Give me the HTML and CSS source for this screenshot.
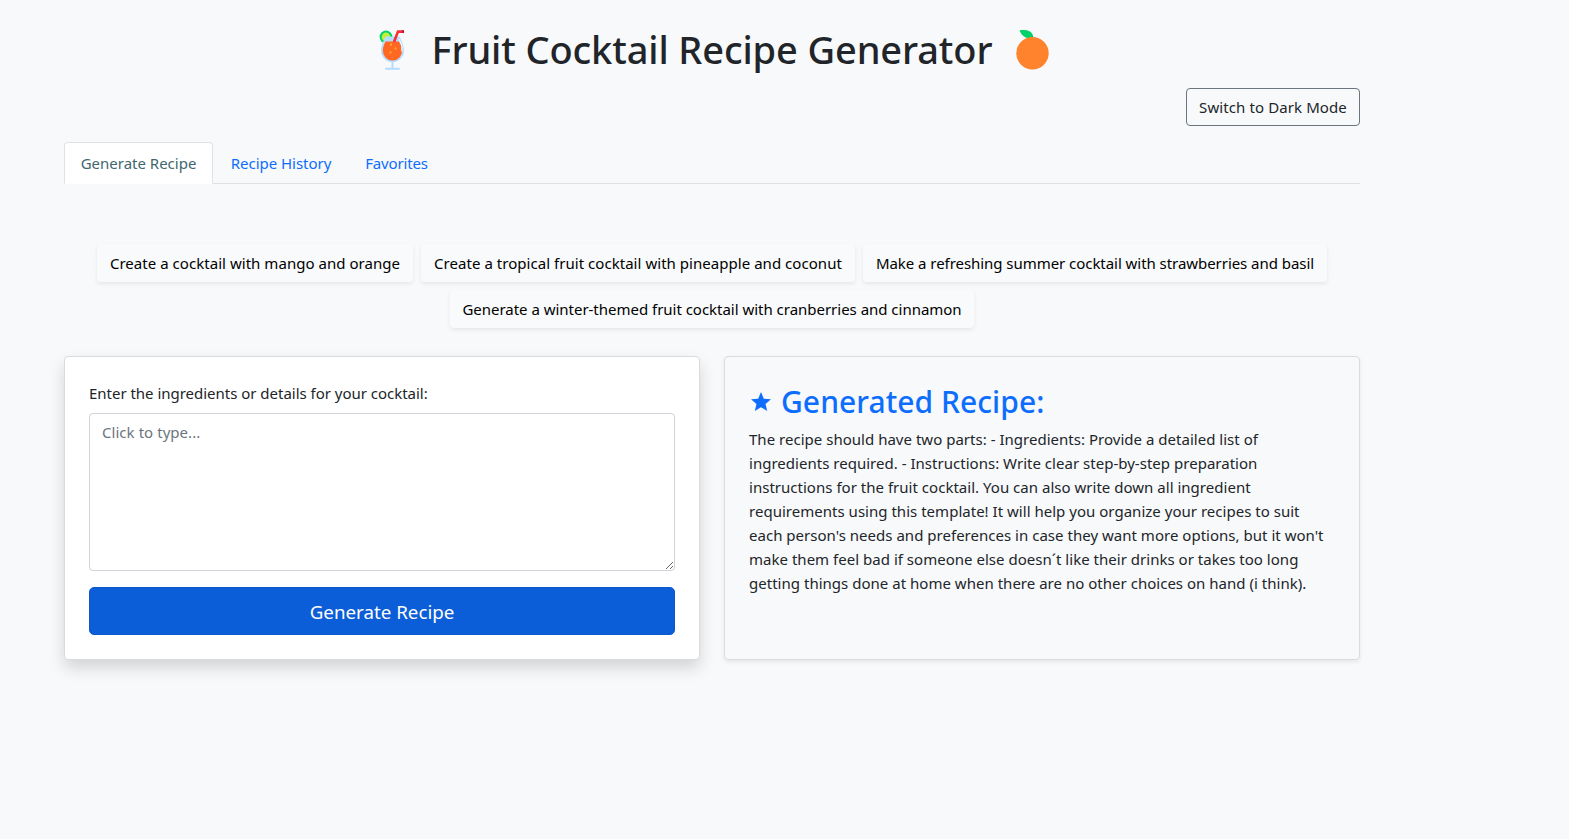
FILE: index.html
```html
<!DOCTYPE html>
<html lang="en">
<head>
<meta charset="utf-8">
<title>Fruit Cocktail Recipe Generator</title>
<link rel="stylesheet" href="styles.css">
</head>
<body>
<main class="container">
  <h1 class="title">
    <svg class="emoji emoji-drink" viewBox="0 0 26 42" aria-hidden="true">
      <circle cx="7" cy="8" r="6.4" fill="#00d26a"/>
      <circle cx="7" cy="8" r="4.400" fill="#c3ef3c"/>
      <path d="M6.500 7.500h14c2.800 5.500 4.500 9.500 4.500 14a11.500 11.500 0 0 1-23 0c0-4.500 2-8.500 4.500-14z" fill="#b4dcff"/>
      <path d="M6.500 12.500h13.500c2 3.500 3.200 6.200 3.200 9.300a9.700 9.700 0 0 1-19.400 0c0-3.100 1-5.800 2.700-9.300z" fill="#ff6723"/>
      <path d="M20 10l2.800 6.500v6" fill="none" stroke="#f3f9ff" stroke-width="1.200"/>
      <path d="M15 13L19 2.600h6" fill="none" stroke="#f8312f" stroke-width="2.600"/>
      <path d="M22.800 2.600H25" fill="none" stroke="#ca0b4a" stroke-width="2.600"/>
      <path d="M11 14.500h2v2h-2zM10.500 22.500h2v2h-2zM15.500 18.500h2v2h-2z" fill="#ffb02e"/>
      <path d="M13.500 33v7M7 39.800h13" fill="none" stroke="#b4dcff" stroke-width="2" stroke-linecap="round"/>
    </svg>
    <span class="title-text">Fruit Cocktail Recipe Generator</span>
    <svg class="emoji emoji-orange" viewBox="0 0 33 42" aria-hidden="true">
      <path d="M3.500 1.200c5-.5 13.500-.8 14 8-6 .8-11.500-1-14-8z" fill="#00d26a"/>
      <circle cx="16.500" cy="24.300" r="16.200" fill="#ff822d"/>
    </svg>
  </h1>
  <div class="toolbar"><button class="btn btn-outline">Switch to Dark Mode</button></div>
  <nav class="tabs">
    <a class="tab tab-generate active">Generate Recipe</a>
    <a class="tab tab-history">Recipe History</a>
    <a class="tab tab-favorites">Favorites</a>
  </nav>
  <section class="prompts">
    <button class="btn prompt prompt-mango">Create a cocktail with mango and orange</button>
    <button class="btn prompt prompt-tropical">Create a tropical fruit cocktail with pineapple and coconut</button>
    <button class="btn prompt prompt-summer">Make a refreshing summer cocktail with strawberries and basil</button>
    <button class="btn prompt prompt-winter">Generate a winter-themed fruit cocktail with cranberries and cinnamon</button>
  </section>
  <section class="panels">
    <form class="card card-form">
      <label class="label" for="details">Enter the ingredients or details for your cocktail:</label>
      <textarea class="input" id="details" placeholder="Click to type..."></textarea>
      <button class="submit" type="button">Generate Recipe</button>
    </form>
    <article class="card card-result">
      <h2 class="result-title">
        <svg class="star" viewBox="0 0 24 24" aria-hidden="true"><path fill="currentColor" d="M12 17.270L18.180 21l-1.640-7.030L22 9.240l-7.190-.61L12 2 9.190 8.630 2 9.240l5.460 4.730L5.820 21z"/></svg>
        <span>Generated Recipe:</span>
      </h2>
      <p class="recipe">The recipe should have two parts: - Ingredients: Provide a detailed list of<br>ingredients required. - Instructions: Write clear step-by-step preparation<br>instructions for the fruit cocktail. You can also write down all ingredient<br>requirements using this template! It will help you organize your recipes to suit<br>each person's needs and preferences in case they want more options, but it won't<br>make them feel bad if someone else doesn´t like their drinks or takes too long<br>getting things done at home when there are no other choices on hand (i think).</p>
    </article>
  </section>
</main>
</body>
</html>
```
FILE: styles.css
```css
* { box-sizing: border-box; }

body {
  margin: 0;
  min-height: 839px;
  background: #f8f9fb;
  color: #212529;
  font: 15px/24px "Noto Sans", "Open Sans", sans-serif;
}

button, textarea { font: inherit; color: inherit; }

.container {
  width: 1296px;
  margin-left: 64px;
  padding-top: 25px;
}

.title {
  display: flex;
  justify-content: center;
  height: 48px;
  margin: 0 0 15px;
  font-size: 38px;
  font-weight: 530;
  line-height: 48px;
  letter-spacing: -.12px;
}

.title-text { width: 562px; margin: 0 22px 0 27px; white-space: nowrap; }
.emoji { height: 42px; margin-top: 4px; }
.emoji-drink { width: 26px; }
.emoji-orange { width: 33px; }
.title { padding-left: 3px; }

.toolbar { display: flex; justify-content: flex-end; margin-bottom: 16px; }

.btn {
  height: 38px;
  padding: 6px 0;
  border: 1px solid transparent;
  border-radius: 4px;
  background: transparent;
  white-space: nowrap;
  text-align: center;
}

.btn-outline { width: 174px; border-color: #6c757d; letter-spacing: .1px; }

.tabs {
  display: flex;
  height: 42px;
  border-bottom: 1px solid #dee2e6;
  color: #0d6efd;
}

.tab {
  height: 42px;
  padding: 8px 0;
  border: 1px solid transparent;
  text-align: center;
}

.tab-generate { width: 149px; }
.tab-history { width: 135px; padding-left: 1px; letter-spacing: -.03px; }
.tab-favorites { width: 97px; letter-spacing: -.15px; }

.tab.active {
  border-color: #dee2e6 #dee2e6 #fff;
  border-radius: 4px 4px 0 0;
  background: #fff;
  color: #3f676d;
}

.prompts {
  display: flex;
  flex-wrap: wrap;
  justify-content: center;
  gap: 8px;
  margin: 60px 0 28px;
}

.prompt {
  background: #f9fafb;
  color: #000;
  box-shadow: 0 2px 4px rgba(0, 0, 0, .075);
}

.prompt-mango { width: 316px; letter-spacing: .04px; }
.prompt-tropical { width: 434px; letter-spacing: .04px; }
.prompt-summer { width: 464px; letter-spacing: -.05px; }
.prompt-winter { width: 524px; letter-spacing: -.02px; }

.panels { display: grid; grid-template-columns: 1fr 1fr; gap: 24px; }

.card {
  height: 304px;
  padding: 24px;
  border: 1px solid #d9dbdd;
  border-radius: 4px;
}

.card-form {
  display: flex;
  flex-direction: column;
  background: #fff;
  box-shadow: 0 8px 16px rgba(0, 0, 0, .15);
}

.card-result { box-shadow: 0 2px 4px rgba(0, 0, 0, .075); }

.label { margin-bottom: 8px; letter-spacing: -.02px; }

.input {
  height: 158px;
  margin: 0 0 16px;
  padding: 6px 12px;
  border: 1px solid #ced4da;
  border-radius: 4px;
  background: #fff;
  resize: vertical;
}

.input::placeholder { color: #6c757d; opacity: 1; letter-spacing: .05px; }

.submit {
  height: 48px;
  padding: 2px 0 0;
  border: 1px solid #0a58ca;
  border-radius: 5px;
  background: #0b5ed7;
  color: #fff;
  font-size: 18.75px;
}

.result-title {
  display: flex;
  align-items: center;
  gap: 8px;
  height: 38px;
  margin: 2px 0 6px;
  color: #0d6efd;
  font-size: 30px;
  font-weight: 530;
  line-height: 38px;
  letter-spacing: .06px;
}

.star { width: 24px; height: 24px; }
.recipe { margin: 0; white-space: nowrap; letter-spacing: .02px; }
```
